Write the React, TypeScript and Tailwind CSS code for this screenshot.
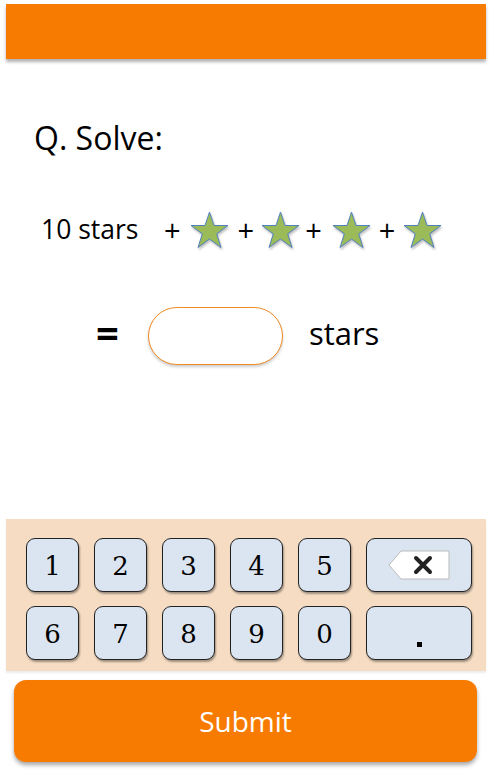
function Star() {
  return (
    <svg width="39" height="38" viewBox="0 0 39 38" className="drop-shadow-[1px_2px_1px_rgba(0,0,0,0.25)]">
      <polygon
        points="19.5,1 24,14.5 38,14.5 26.7,22.8 31,36.5 19.5,28 8,36.5 12.3,22.8 1,14.5 15,14.5"
        fill="#9bbb59"
        stroke="#4f81bd"
        strokeWidth="1"
        strokeLinejoin="miter"
      />
    </svg>
  );
}

function Key({ label }: { label: string }) {
  return (
    <button className="w-[53px] h-[54px] rounded-[9px] bg-[#dbe5f1] border border-[#222] shadow-[1px_2px_2px_rgba(0,0,0,0.35)] flex items-center justify-center text-[26px] text-black font-['DejaVu_Serif',serif] pt-[2px]">
      {label}
    </button>
  );
}

export default function App() {
  const font = "font-['Open_Sans','Noto_Sans',sans-serif]";
  return (
    <div className={`w-[492px] h-[770px] bg-white relative ${font}`}>
      {/* Header bar */}
      <div className="mx-[6px] pt-[4px]">
        <div className="h-[55px] bg-[#f77b00] shadow-[0_3px_3px_rgba(0,0,0,0.3)]"></div>
      </div>

      {/* Question */}
      <div className="pl-[34px] pt-[61px] text-[32px] leading-[36px] text-black">Q. Solve:</div>

      <div className="flex items-center pl-[41px] mt-[54px] h-[40px] text-[26.5px] text-black">
        <span className="w-[121px]">10 stars</span>
        <span className="text-[29px] ml-[2px] mr-[9px]">+</span>
        <Star />
        <span className="text-[29px] ml-[9px] mr-[7px]">+</span>
        <Star />
        <span className="text-[29px] ml-[5px] mr-[10px]">+</span>
        <Star />
        <span className="text-[29px] ml-[8px] mr-[8px]">+</span>
        <Star />
      </div>

      {/* Answer */}
      <div className="flex items-center mt-[57px] h-[58px]">
        <span className="ml-[96px] text-[40px] font-bold leading-none pb-[6px]">=</span>
        <div className="ml-[29px] w-[135px] h-[58px] rounded-full border border-[#f08a24] bg-white shadow-[0_2px_3px_rgba(0,0,0,0.2)]"></div>
        <span className="ml-[26px] text-[31px] pb-[6px]">stars</span>
      </div>

      {/* Keypad */}
      <div className="absolute left-[6px] top-[519px] w-[480px] h-[152px] bg-[#f5dcc3] pt-[19px] pl-[20px] shadow-[0_2px_2px_rgba(0,0,0,0.08)]">
        <div className="flex flex-col gap-[14px]">
          <div className="flex gap-[15px]">
            {["1", "2", "3", "4", "5"].map((k) => (
              <Key key={k} label={k} />
            ))}
            <button className="w-[106px] h-[54px] rounded-[9px] bg-[#dbe5f1] border border-[#222] shadow-[1px_2px_2px_rgba(0,0,0,0.35)] flex items-center justify-center">
              <svg width="62" height="30" viewBox="0 0 62 30">
                <polygon points="1,15 13,1 61,1 61,29 13,29" fill="#fff" stroke="#bbb" strokeWidth="1" />
                <path d="M28 8 L42 22 M42 8 L28 22" stroke="#222" strokeWidth="4" strokeLinecap="round" />
              </svg>
            </button>
          </div>
          <div className="flex gap-[15px]">
            {["6", "7", "8", "9", "0"].map((k) => (
              <Key key={k} label={k} />
            ))}
            <button className="w-[106px] h-[54px] rounded-[9px] bg-[#dbe5f1] border border-[#222] shadow-[1px_2px_2px_rgba(0,0,0,0.35)] flex items-end justify-center pb-[12px]">
              <span className="w-[5px] h-[5px] bg-black"></span>
            </button>
          </div>
        </div>
      </div>

      {/* Submit */}
      <button className="absolute left-[14px] top-[680px] w-[463px] h-[82px] rounded-[12px] bg-[#f77b00] text-white text-[28px] shadow-[0_3px_4px_rgba(0,0,0,0.35)]">
        Submit
      </button>
    </div>
  );
}
